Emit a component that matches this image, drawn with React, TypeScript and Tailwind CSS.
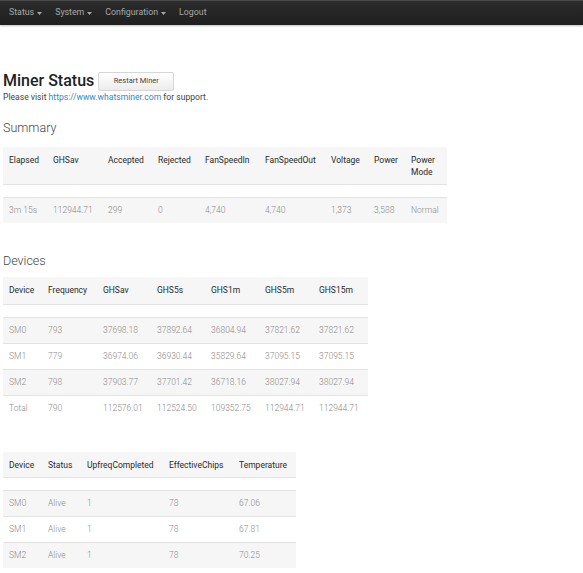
import React from "react";

type Row = (string | number)[];

function Caret() {
  return (
    <svg className="ml-[3px] inline-block" width="5" height="3" viewBox="0 0 5 3">
      <path d="M0 0h5L2.5 3z" fill="currentColor" />
    </svg>
  );
}

function DataTable({
  cols,
  widths,
  rows,
  headH = "h-[27px]",
}: {
  cols: string[];
  widths: string[];
  rows: Row[];
  headH?: string;
}) {
  return (
    <table className="table-fixed border-collapse text-[8.5px] leading-[12px]">
      <tbody>
        <tr className={`bg-[#f6f6f6] ${headH}`}>
          {cols.map((c, i) => (
            <th
              key={c}
              className={`${widths[i]} px-[6px] pt-[7px] align-top text-left font-normal text-[#2a2a2a]`}
            >
              {c}
            </th>
          ))}
        </tr>
        <tr className="h-[13px] border-t border-[#e3e3e3]">
          <td colSpan={cols.length} />
        </tr>
        {rows.map((r, i) => (
          <tr
            key={i}
            className={`h-[26px] border-t border-[#e3e3e3] ${i % 2 === 0 ? "bg-[#f6f6f6]" : "bg-white"}`}
          >
            {r.map((v, j) => (
              <td key={j} className="px-[6px] align-middle text-[#8a8a8a] font-light">
                {v}
              </td>
            ))}
          </tr>
        ))}
      </tbody>
    </table>
  );
}

export default function App() {
  return (
    <div className="min-h-[573px] bg-white font-['Roboto','Liberation_Sans',sans-serif]">
      {/* Navbar */}
      <nav className="flex h-[25px] items-center border-t border-[#4a4a4a] bg-gradient-to-b from-[#2c2c2c] to-[#1f1f1f] pl-[9px] text-[8.8px] text-[#a8a8a8] shadow-[0_1px_2px_rgba(0,0,0,0.25)]">
        <span className="mr-[13px] flex items-center">
          Status <Caret />
        </span>
        <span className="mr-[13px] flex items-center">
          System <Caret />
        </span>
        <span className="mr-[13px] flex items-center">
          Configuration <Caret />
        </span>
        <span>Logout</span>
      </nav>

      <main className="px-[3px] pt-[45px]">
        {/* Title */}
        <div className="flex h-[22px] items-center">
          <h1 className="text-[16px] font-medium leading-[22px] text-[#222]">Miner Status</h1>
          <button className="ml-[4px] h-[19px] w-[76px] rounded-[2px] border border-[#d6d6d6] bg-gradient-to-b from-white to-[#ececec] text-[7.5px] text-[#444]">
            Restart Miner
          </button>
        </div>
        <p className="text-[8.6px] leading-[10px] text-[#444]">
          Please visit <span className="text-[#2b8cc4]">https://www.whatsminer.com</span> for support.
        </p>

        {/* Summary */}
        <h2 className="mt-[18px] text-[12.5px] font-light leading-[16px] text-[#444]">Summary</h2>
        <div className="mt-[11px]">
          <DataTable
            headH="h-[37px]"
            cols={["Elapsed", "GHSav", "Accepted", "Rejected", "FanSpeedIn", "FanSpeedOut", "Voltage", "Power", "Power Mode"]}
            widths={["w-[44px]", "w-[55px]", "w-[50px]", "w-[47px]", "w-[60px]", "w-[66px]", "w-[43px]", "w-[37px]", "w-[42px]"]}
            rows={[["3m 15s", "112944.71", "299", "0", "4,740", "4,740", "1,373", "3,588", "Normal"]]}
          />
        </div>

        {/* Devices */}
        <h2 className="mt-[30px] text-[12.5px] font-light leading-[16px] text-[#444]">Devices</h2>
        <div className="mt-[8px]">
          <DataTable
            cols={["Device", "Frequency", "GHSav", "GHS5s", "GHS1m", "GHS5m", "GHS15m"]}
            widths={["w-[39px]", "w-[55px]", "w-[54px]", "w-[54px]", "w-[54px]", "w-[54px]", "w-[55px]"]}
            rows={[
              ["SM0", "793", "37698.18", "37892.64", "36804.94", "37821.62", "37821.62"],
              ["SM1", "779", "36974.06", "36930.44", "35829.64", "37095.15", "37095.15"],
              ["SM2", "798", "37903.77", "37701.42", "36718.16", "38027.94", "38027.94"],
              ["Total", "790", "112576.01", "112524.50", "109352.75", "112944.71", "112944.71"],
            ]}
          />
        </div>

        <div className="mt-[31px]">
          <DataTable
            headH="h-[25px]"
            cols={["Device", "Status", "UpfreqCompleted", "EffectiveChips", "Temperature"]}
            widths={["w-[39px]", "w-[39px]", "w-[82px]", "w-[70px]", "w-[63px]"]}
            rows={[
              ["SM0", "Alive", "1", "78", "67.06"],
              ["SM1", "Alive", "1", "78", "67.81"],
              ["SM2", "Alive", "1", "78", "70.25"],
            ]}
          />
        </div>
      </main>
    </div>
  );
}
